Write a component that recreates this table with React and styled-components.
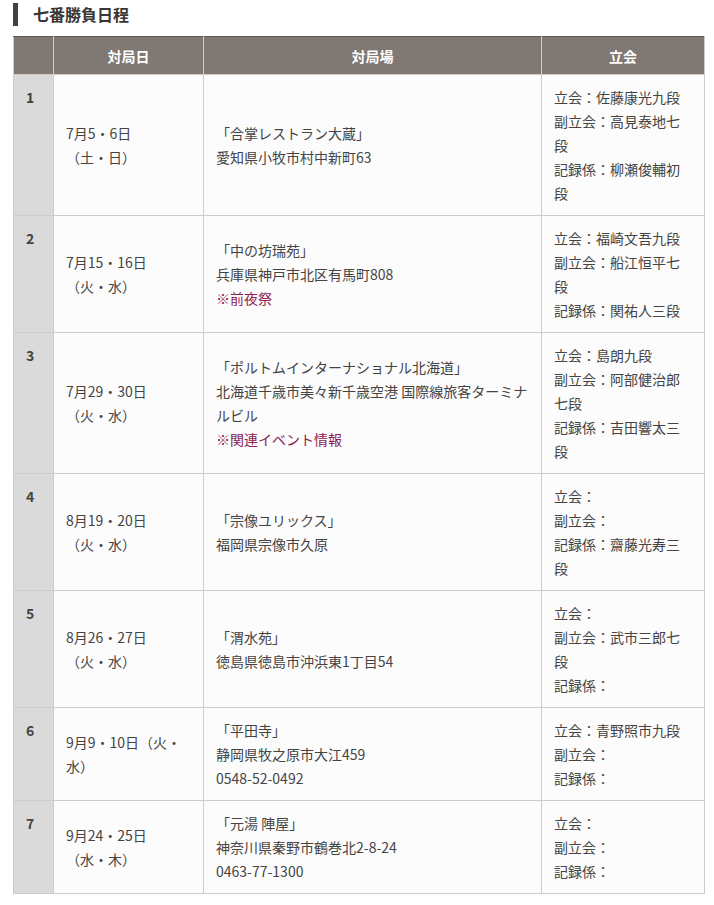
import React from "react";
import styled, { createGlobalStyle } from "styled-components";

const GlobalStyle = createGlobalStyle`
  body {
    margin: 0;
    background: #fff;
    font-family: "Noto Sans CJK JP", "Noto Sans", sans-serif;
    color: #444;
  }
`;

const Wrapper = styled.div`
  padding: 3px 10px 12px 13px;
`;

const Heading = styled.h2`
  margin: 0 0 10px;
  padding-left: 15px;
  border-left: 5px solid #4a3f3f;
  font-size: 16px;
  line-height: 23px;
  font-weight: bold;
  color: #3b3636;
`;

const Table = styled.table`
  width: 691px;
  border-collapse: collapse;
  table-layout: fixed;
  font-size: 14px;
  line-height: 24px;
`;

const Th = styled.th`
  height: 37px;
  padding: 0;
  background: #807873;
  color: #fff;
  font-weight: bold;
  font-size: 14px;
  text-align: center;
  border: 1px solid #ccc;
  border-top: 1px solid #5e5652;
  border-bottom: none;
  width: ${(p) => p.$w}px;
`;

const Num = styled.td`
  background: #dadada;
  color: #444;
  font-weight: bold;
  vertical-align: top;
  padding: 10px 12px;
  border: 1px solid #ccc;
`;

const Td = styled.td`
  background: #fcfcfc;
  vertical-align: ${(p) => (p.$top ? "top" : "middle")};
  padding: 10px 12px;
  border: 1px solid #ccc;
`;

const Note = styled.span`
  color: #8b2252;
`;

const rows = [
  {
    date: ["7月5・6日", "（土・日）"],
    venue: ["「合掌レストラン大蔵」", "愛知県小牧市村中新町63"],
    ref: ["立会：佐藤康光九段", "副立会：高見泰地七段", "記録係：柳瀬俊輔初段"],
  },
  {
    date: ["7月15・16日", "（火・水）"],
    venue: ["「中の坊瑞苑」", "兵庫県神戸市北区有馬町808"],
    note: "※前夜祭",
    ref: ["立会：福崎文吾九段", "副立会：船江恒平七段", "記録係：関祐人三段"],
  },
  {
    date: ["7月29・30日", "（火・水）"],
    venue: ["「ポルトムインターナショナル北海道」", "北海道千歳市美々新千歳空港 国際線旅客ターミナルビル"],
    note: "※関連イベント情報",
    ref: ["立会：島朗九段", "副立会：阿部健治郎七段", "記録係：吉田響太三段"],
  },
  {
    date: ["8月19・20日", "（火・水）"],
    venue: ["「宗像ユリックス」", "福岡県宗像市久原"],
    ref: ["立会：", "副立会：", "記録係：齋藤光寿三段"],
  },
  {
    date: ["8月26・27日", "（火・水）"],
    venue: ["「渭水苑」", "徳島県徳島市沖浜東1丁目54"],
    ref: ["立会：", "副立会：武市三郎七段", "記録係："],
  },
  {
    date: ["9月9・10日（火・水）"],
    venue: ["「平田寺」", "静岡県牧之原市大江459", "0548-52-0492"],
    ref: ["立会：青野照市九段", "副立会：", "記録係："],
  },
  {
    date: ["9月24・25日", "（水・木）"],
    venue: ["「元湯 陣屋」", "神奈川県秦野市鶴巻北2-8-24", "0463-77-1300"],
    ref: ["立会：", "副立会：", "記録係："],
  },
];

const Lines = ({ items }) =>
  items.map((t, i) => (
    <React.Fragment key={i}>
      {i > 0 && <br />}
      {t}
    </React.Fragment>
  ));

const App = () => {
  return (
    <Wrapper>
      <GlobalStyle />
      <Heading>七番勝負日程</Heading>
      <Table>
        <thead>
          <tr>
            <Th $w={39}></Th>
            <Th $w={149}>対局日</Th>
            <Th $w={337}>対局場</Th>
            <Th $w={162}>立会</Th>
          </tr>
        </thead>
        <tbody>
          {rows.map((r, i) => (
            <tr key={i}>
              <Num>{i + 1}</Num>
              <Td>
                <Lines items={r.date} />
              </Td>
              <Td>
                <Lines items={r.venue} />
                {r.note && (
                  <>
                    <br />
                    <Note>{r.note}</Note>
                  </>
                )}
              </Td>
              <Td $top>
                <Lines items={r.ref} />
              </Td>
            </tr>
          ))}
        </tbody>
      </Table>
    </Wrapper>
  );
};

export default App;
